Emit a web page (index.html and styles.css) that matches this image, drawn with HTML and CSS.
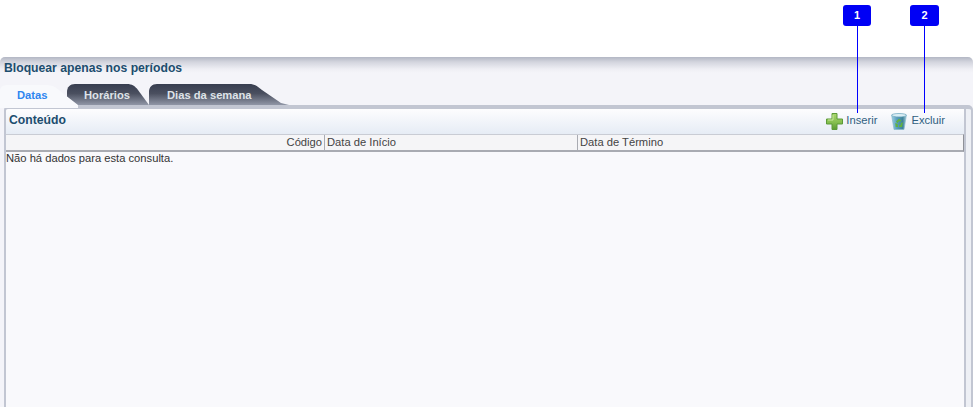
FILE: index.html
```html
<!DOCTYPE html>
<html lang="pt">
<head>
<meta charset="utf-8">
<title>Bloquear apenas nos períodos</title>
<link rel="stylesheet" href="styles.css">
</head>
<body>
<div class="marker marker-1"><span class="badge">1</span><span class="stem"></span></div>
<div class="marker marker-2"><span class="badge">2</span><span class="stem"></span></div>
<main class="page">
  <h1 class="title">Bloquear apenas nos períodos</h1>
  <nav class="tabs">
    <a class="tab tab-active">Datas</a>
    <a class="tab tab-dark tab-hor">Horários</a>
    <a class="tab tab-dark tab-dias">Dias da semana</a>
  </nav>
  <section class="panel">
    <div class="panel-inner">
      <header class="panel-head">
        <h2 class="panel-title">Conteúdo</h2>
        <div class="tools">
          <a class="tool tool-ins">
            <svg class="icon" width="17" height="17" viewBox="0 0 17 17">
              <defs>
                <linearGradient id="g" x1="0" y1="0" x2="0" y2="1"><stop offset="0" stop-color="#a9d66e"/><stop offset=".55" stop-color="#86bf4f"/><stop offset="1" stop-color="#5a9a32"/></linearGradient>
              </defs>
              <path d="M6 .5h5v5.500h5.500v5H11v5.500H6V11H.5V6H6z" fill="url(#g)" stroke="#5c9a38" stroke-linejoin="round"/>
              <path d="M7 2v5H2" fill="none" stroke="#c8e79c" stroke-width="1"/>
            </svg>
            Inserir
          </a>
          <a class="tool tool-exc">
            <svg class="icon" width="16" height="17" viewBox="0 0 16 17">
              <defs>
                <linearGradient id="b" x1="0" y1="0" x2="1" y2="0"><stop offset="0" stop-color="#9fd0e2"/><stop offset=".35" stop-color="#5a9fbd"/><stop offset=".75" stop-color="#3f8299"/><stop offset="1" stop-color="#a3cbd9"/></linearGradient>
              </defs>
              <path d="M.6 2 3 16.500h10L15.400 2z" fill="url(#b)" stroke="#7fb3c8" stroke-width=".6"/>
              <ellipse cx="8" cy="2.200" rx="7.500" ry="1.700" fill="#d9edf4" stroke="#6aa5bd" stroke-width=".7"/>
              <path d="M5 8.500 8 5.800l2.600 2-1.500 1-1-.8-1.600 2.200zM11.800 9 11.200 14H8v-1.700l2-.3-.5-1.600zM4.300 10l2.300.9.500 3-2.400.2z" fill="#62b33f"/>
            </svg>
            Excluir
          </a>
        </div>
      </header>
      <div class="grid">
        <div class="grid-head">
          <div class="col col-code">Código</div>
          <div class="col col-start">Data de Início</div>
          <div class="col col-end">Data de Término</div>
        </div>
        <p class="empty">Não há dados para esta consulta.</p>
      </div>
    </div>
  </section>
</main>
</body>
</html>
```
FILE: styles.css
```css
html, body { margin: 0; padding: 0; background: #fff; }
body {
  width: 976px;
  height: 415px;
  overflow: hidden;
  position: relative;
  font-family: "Liberation Sans", Arial, sans-serif;
}
.page {
  margin-top: 57px;
  width: 973px;
  height: 350px;
  display: flex;
  flex-direction: column;
  border-radius: 5px 5px 0 0;
  background: linear-gradient(#b3b7c4 0, #d3d5de 5px, #eeeef4 12px, #f4f4f9 16px, #f4f4f9 100%);
}
.title {
  margin: 4px 0 0 4px;
  font-size: 12.200px;
  line-height: 14px;
  font-weight: bold;
  color: #1c4d6e;
}
.tabs {
  display: flex;
  height: 21px;
  margin-top: 9px;
}
.tab {
  display: block;
  box-sizing: border-box;
  height: 21px;
  font-size: 11.200px;
  font-weight: bold;
  line-height: 22px;
  flex: none;
}
.tab-active {
  position: relative;
  z-index: 2;
  width: 78px;
  height: 24px;
  margin-right: -11px;
  padding-left: 17px;
  color: #2e86f0;
  background: #f8f9fc;
  clip-path: path("M0 24V7C0 3 3 1 8 1H46C52 1 56 3 60 7L78 21V24Z");
}
.tab-dark {
  color: #dfe3e8;
  background: linear-gradient(#383e50 0, #4a4f5f 45%, #9096a6 100%);
}
.tab-hor {
  width: 82px;
  padding-left: 17px;
  clip-path: path("M0 21V8C0 3 3 0 8 0H60C65 0 68 2 71 6L82 21Z");
}
.tab-dias {
  position: relative;
  z-index: 1;
  width: 140px;
  padding-left: 18px;
  clip-path: path("M0 21V8C0 3 3 0 8 0H100C106 0 108 2 113 6L132 19L140 21Z");
}
.panel {
  flex: 1;
  min-height: 0;
  display: flex;
  margin-left: 4px;
  border: solid #c2c6d2;
  border-width: 4px 2px 0;
  border-radius: 5px 5px 0 0;
  background: #eef0f5;
}
.panel-inner {
  width: 958px;
  display: flex;
  flex-direction: column;
  border-right: 2px solid #c2c6d2;
}
.panel-head {
  height: 25px;
  flex: none;
  box-sizing: border-box;
  padding-bottom: 3px;
  display: flex;
  justify-content: space-between;
  align-items: center;
  background: linear-gradient(#fdfdfe, #e6ecf5);
  border-radius: 3px 0 0 0;
}
.panel-title {
  margin: 0 0 0 3px;
  font-size: 12.200px;
  font-weight: bold;
  color: #1c4d6e;
}
.tools {
  display: flex;
  margin-right: 19px;
}
.tool {
  display: flex;
  align-items: center;
  gap: 3px;
  font-size: 11.200px;
  color: #2f5f80;
}
.tool-ins { margin-right: 14px; }
.tool-exc { gap: 4px; }
.icon { flex: none; display: block; margin-top: 2px; }
.grid {
  flex: 1;
  min-height: 0;
  background: #f9f9fc;
}
.grid-head {
  display: flex;
  height: 18px;
  box-sizing: border-box;
  background: #f5f5f7;
  border-top: 1px solid #c9ccd4;
  border-bottom: 2px solid #a9abb2;
  border-right: 1px solid #8f9198;
  font-size: 11.200px;
  line-height: 15px;
  color: #444;
}
.col { box-sizing: border-box; border-right: 1px solid #a9abb2; }
.col-code { width: 319px; padding-right: 2px; text-align: right; }
.col-start { width: 253px; padding-left: 2px; }
.col-end { flex: 1; padding-left: 2px; border-right: 0; }
.empty {
  margin: 0;
  font-size: 11.200px;
  line-height: 13px;
  color: #333;
}
.marker {
  position: absolute;
  top: 5px;
  display: flex;
  flex-direction: column;
  align-items: center;
  z-index: 3;
}
.marker-1 { left: 843px; width: 28px; }
.marker-2 { left: 910px; width: 29px; }
.badge {
  width: 100%;
  height: 21px;
  border-radius: 3px;
  background: #0000f5;
  color: #fff;
  font-size: 11px;
  font-weight: bold;
  line-height: 21px;
  text-align: center;
}
.stem {
  width: 1px;
  height: 87px;
  background: #0000ff;
}
```
